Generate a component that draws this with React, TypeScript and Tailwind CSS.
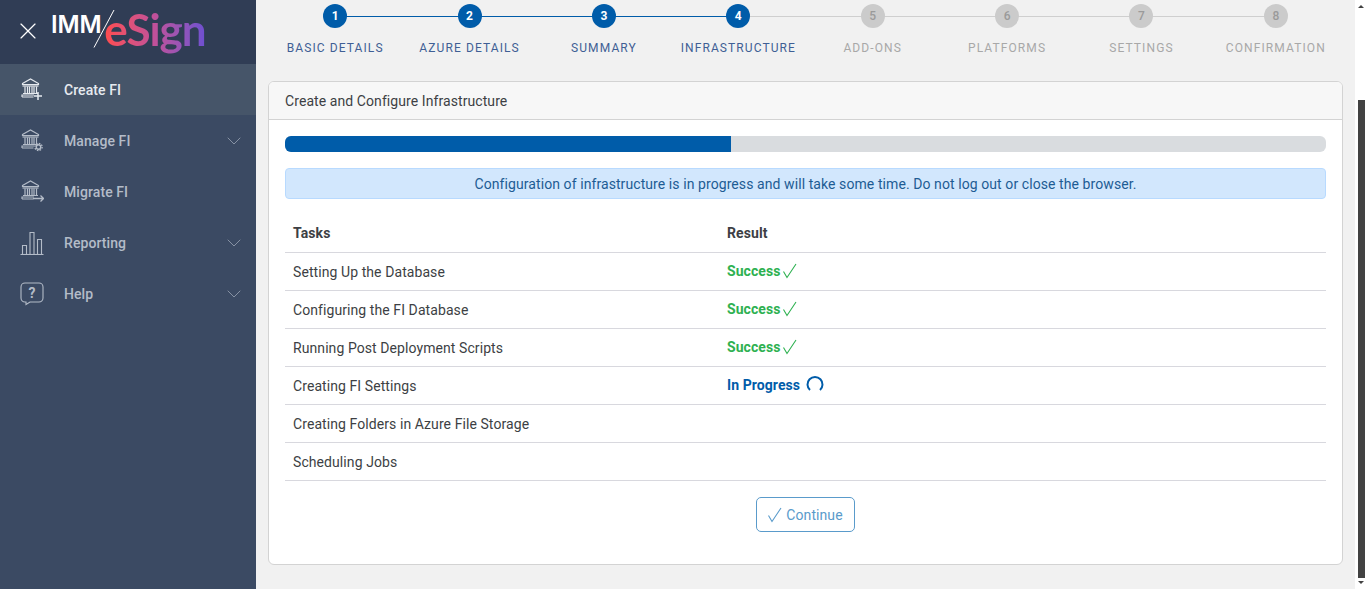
import { ChevronDown, X } from "lucide-react";

const steps = [
  "BASIC DETAILS",
  "AZURE DETAILS",
  "SUMMARY",
  "INFRASTRUCTURE",
  "ADD-ONS",
  "PLATFORMS",
  "SETTINGS",
  "CONFIRMATION",
];

const tasks = [
  { name: "Setting Up the Database", result: "success" },
  { name: "Configuring the FI Database", result: "success" },
  { name: "Running Post Deployment Scripts", result: "success" },
  { name: "Creating FI Settings", result: "progress" },
  { name: "Creating Folders in Azure File Storage", result: "" },
  { name: "Scheduling Jobs", result: "" },
];

function Bank({ children }: { children?: React.ReactNode }) {
  return (
    <svg width="24" height="24" viewBox="0 0 24 24" fill="none" stroke="currentColor" strokeWidth="1.2">
      <path d="M2.5 5.5 L10.5 1 L18.5 5.5 V6.5 H2.5 Z" />
      <path d="M2.5 8 H18.5" />
      <path d="M5 8.5v6.5M7.5 8.5v6.5M9.5 8.5v6.5M12 8.5v6.5M14 8.5v6.5M16.5 8.5v6.5" />
      <path d="M3 15.5 H18 M2 19 V17 H14 M2 19 H13.5" />
      {children}
    </svg>
  );
}

function CreateIcon() {
  return (
    <Bank>
      <path d="M18 14v8M14 18h8" strokeWidth="1.5" />
    </Bank>
  );
}

function ManageIcon() {
  return (
    <Bank>
      <circle cx="18.5" cy="18" r="2.2" strokeWidth="1.4" />
      <circle cx="18.5" cy="18" r="3.6" strokeWidth="1.3" strokeDasharray="1.6 1.2" />
    </Bank>
  );
}

function MigrateIcon() {
  return (
    <Bank>
      <path d="M13 18.5h10.5M20.5 15.5l3 3-3 3" strokeWidth="1.3" />
    </Bank>
  );
}

function ReportIcon() {
  return (
    <svg width="24" height="24" viewBox="0 0 24 24" fill="none" stroke="currentColor" strokeWidth="1.1">
      <path d="M0.5 23.5h23" />
      <path d="M2.5 23v-8.5h4V23M10 23V1.5h4V23M17.5 23V8.5h4V23" />
    </svg>
  );
}

function HelpIcon() {
  return (
    <div className="relative h-6 w-6">
      <svg width="24" height="24" viewBox="0 0 24 24" fill="none" stroke="currentColor" strokeWidth="1.1">
        <path d="M5 1h14a4 4 0 0 1 4 4v11a4 4 0 0 1-4 4H10l-4 2.5V20H5a4 4 0 0 1-4-4V5a4 4 0 0 1 4-4z" />
      </svg>
      <span className="absolute left-0 top-[2px] w-full text-center text-[14px] font-bold leading-[18px]">?</span>
    </div>
  );
}

function Check({ size = 16 }: { size?: number }) {
  return (
    <svg width={size} height={size} viewBox="0 0 16 16" fill="none" stroke="currentColor" strokeWidth="1.1">
      <path d="M1.5 8.5 L5 14.5 L14 1" />
    </svg>
  );
}

const menu = [
  { label: "Create FI", icon: <CreateIcon />, active: true },
  { label: "Manage FI", icon: <ManageIcon />, caret: true },
  { label: "Migrate FI", icon: <MigrateIcon /> },
  { label: "Reporting", icon: <ReportIcon />, caret: true },
  { label: "Help", icon: <HelpIcon />, caret: true },
];

function Sidebar() {
  return (
    <aside className="flex w-[256px] shrink-0 flex-col bg-[#3b4a63]">
      <div className="flex h-[64px] items-center bg-[#303d55] pl-[14px]">
        <X className="mb-[2px] h-7 w-7 text-white" strokeWidth={1} />
        <div className="relative ml-[9px] flex h-[64px] w-[170px] items-center">
          <span className="mb-[14px] font-['Inter',sans-serif] text-[24px] font-semibold leading-none tracking-[-0.2px] text-white">IMM</span>
          <svg className="absolute left-[41px] top-[9px]" width="24" height="40" viewBox="0 0 24 40" fill="none" stroke="#ffffff" strokeWidth="1">
            <path d="M2 38.5 L22 1" />
          </svg>
          <span className="mb-[6px] ml-[3px] bg-gradient-to-r from-[#ff4b4b] via-[#c0509a] to-[#6d4fd1] bg-clip-text font-['Lato',sans-serif] text-[44px] font-bold leading-[56px] tracking-[-1px] text-transparent">
            eSign
          </span>
        </div>
      </div>
      {menu.map((item) => (
        <div
          key={item.label}
          className={`flex h-[51px] items-center pl-[20px] pr-[10px] text-sm tracking-[0.08px] ${
            item.active ? "bg-[#465569] text-[#e6eaef]" : "text-[#b4bcc8]"
          }`}
        >
          <span className="w-[44px] shrink-0">{item.icon}</span>
          <span className="flex-1 font-medium">{item.label}</span>
          {item.caret && <ChevronDown className="h-6 w-6 text-[#9aa5b5]" strokeWidth={0.8} />}
        </div>
      ))}
    </aside>
  );
}

function Stepper() {
  return (
    <div className="grid grid-cols-8">
      {steps.map((step, i) => {
        const done = i < 4;
        return (
          <div key={step} className="flex flex-col items-center">
            <div className="relative flex h-[32px] w-full items-center justify-center">
              {i < 7 && (
                <div className={`absolute left-1/2 top-[16px] h-px w-full ${i < 3 ? "bg-[#005ca9]" : "bg-[#cfcfcf]"}`} />
              )}
              <div
                className={`relative flex h-6 w-6 items-center justify-center rounded-full text-xs font-bold ${
                  done ? "bg-[#005ca9] text-white" : "bg-[#cbcbcb] font-medium text-[#9a9a9a]"
                }`}
              >
                {i + 1}
              </div>
            </div>
            <div className={`mt-[8px] text-xs leading-[16px] tracking-[1.1px] ${done ? "text-[#3f5f95]" : "text-[#a8a8a8]"}`}>
              {step}
            </div>
          </div>
        );
      })}
    </div>
  );
}

function Result({ value }: { value: string }) {
  if (value === "success") {
    return (
      <span className="mb-[2px] flex items-center gap-[1px] font-bold text-[#2eb151]">
        <span>Success</span>
        <Check />
      </span>
    );
  }
  if (value === "progress") {
    return (
      <span className="mb-[2px] flex items-center font-bold text-[#005ca9]">
        <span>In Progress</span>
        <svg className="mb-[2px] ml-[6px]" width="18" height="17" viewBox="0 0 18 17" fill="none" stroke="currentColor" strokeWidth="2">
          <path d="M4 15 A7.5 7.5 0 1 1 14 15" />
        </svg>
      </span>
    );
  }
  return null;
}

function Card() {
  return (
    <section className="mx-[12px] mt-[25px] h-[484px] overflow-hidden rounded-[6px] border border-[#d3d3d3] bg-white">
      <div className="flex h-[38px] items-center border-b border-[#d3d3d3] bg-[#f7f7f7] px-[16px] text-sm tracking-[0.08px] text-[#3d3f44]">
        Create and Configure Infrastructure
      </div>
      <div className="px-[16px] pt-[16px]">
        <div className="h-4 overflow-hidden rounded-[6px] bg-[#d9dcdf]">
          <div className="h-full w-[42.85%] bg-[#005ca9]" />
        </div>
        <div className="mt-4 flex h-[31px] items-center justify-center rounded-[4px] border border-[#b8daff] bg-[#d2e7fd] text-sm tracking-[0.08px] text-[#1d5c94]">
          Configuration of infrastructure is in progress and will take some time. Do not log out or close the browser.
        </div>
        <div className="mt-[15px] text-sm tracking-[0.08px] text-[#3d3f44]">
          <div className="flex h-[39px] items-center border-b border-[#d8d8de] px-2 pb-px font-bold">
            <div className="w-[434px]">Tasks</div>
            <div>Result</div>
          </div>
          {tasks.map((t) => (
            <div key={t.name} className="flex h-[38px] items-center border-b border-[#d8d8de] px-2">
              <div className="w-[434px]">{t.name}</div>
              <Result value={t.result} />
            </div>
          ))}
        </div>
        <div className="mt-4 flex justify-center">
          <button className="flex h-[35px] w-[99px] items-center justify-center gap-[3px] rounded-[5px] border border-[#5a9bcb] bg-white pr-[1px] text-sm tracking-[0.08px] text-[#5a9bcb]">
            <Check size={16} />
            Continue
          </button>
        </div>
      </div>
    </section>
  );
}

function Scrollbar() {
  return (
    <div className="flex w-[11px] shrink-0 flex-col items-center bg-white pl-[1px]">
      <div className="mt-[5px] h-0 w-0 border-x-[3px] border-b-[3px] border-x-transparent border-b-[#424242]" />
      <div className="mt-[92px] h-[478px] w-[7px] bg-[#424242]" />
      <div className="mt-[3px] h-0 w-0 border-x-[3px] border-t-[3px] border-x-transparent border-t-[#424242]" />
    </div>
  );
}

export default function App() {
  return (
    <div className="flex h-[589px] w-[1366px] overflow-hidden bg-[#f1f1f1] font-['Roboto',sans-serif]">
      <Sidebar />
      <main className="min-w-0 flex-1 pt-0">
        <div className="px-[12px]">
          <Stepper />
        </div>
        <Card />
      </main>
      <Scrollbar />
    </div>
  );
}
